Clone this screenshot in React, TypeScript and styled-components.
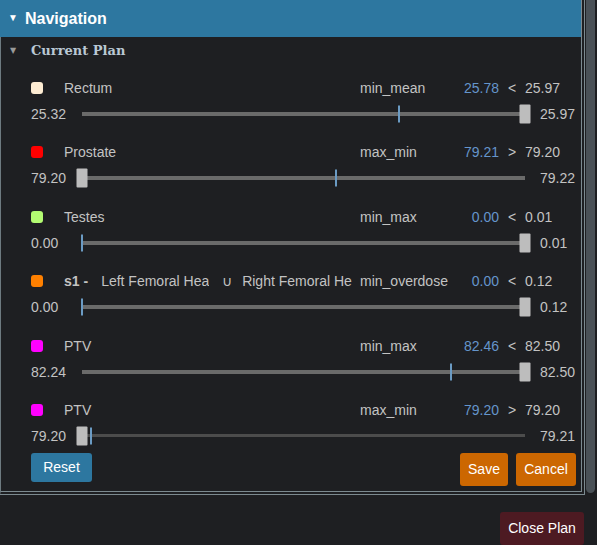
import React, { FC } from 'react';
import styled, { createGlobalStyle } from 'styled-components';

const GlobalStyle = createGlobalStyle`
  html, body {
    margin: 0;
    padding: 0;
    background: #1e1f22;
  }
  body {
    font-family: 'Liberation Sans', Arial, sans-serif;
    font-size: 14px;
    color: #c3c3c3;
  }
`;

const Page = styled.div`
  display: flex;
  width: 597px;
  height: 545px;
  overflow: hidden;
`;

const Main = styled.div`
  width: 585px;
  display: flex;
  flex-direction: column;
`;

const Panel = styled.div`
  box-sizing: border-box;
  width: 585px;
  border-left: 1px solid #6d7a80;
  border-right: 4px double #7c8a90;
  border-bottom: 4px double #7c8a90;
  padding-bottom: 5px;
`;

const Header = styled.div`
  height: 37px;
  background: #2d77a0;
  display: flex;
  align-items: center;
  padding-left: 8px;
  color: #fff;
  font-weight: bold;
  font-size: 16px;
  margin-left: -1px;
`;

const Caret = styled.span`
  font-size: 10px;
  width: 17px;
  margin-top: -2px;
`;

const SubHeader = styled.div`
  height: 26px;
  display: flex;
  align-items: center;
  padding-left: 9px;
  font-family: 'DejaVu Serif', 'Liberation Serif', serif;
  font-weight: bold;
  font-size: 13px;
  color: #b9c8d4;
`;

const SubCaret = styled.span`
  font-family: 'DejaVu Sans', sans-serif;
  font-size: 8px;
  color: #9a9a9a;
  width: 21px;
`;

const List = styled.div`
  display: flex;
  flex-direction: column;
  gap: 18.4px;
  padding: 15px 0 0 30px;
`;

const Item = styled.div`
  display: grid;
  grid-template-rows: 20px 20px;
  row-gap: 6px;
`;

const TopLine = styled.div`
  display: grid;
  grid-template-columns: 12px 317px 100px 39px 26px 1fr;
  align-items: center;
  white-space: nowrap;
`;

const Swatch = styled.span<{ $color: string }>`
  width: 12px;
  height: 12px;
  border-radius: 3px;
  background: ${(p) => p.$color};
`;

const Label = styled.div`
  display: flex;
  align-items: center;
  overflow: hidden;
  padding-left: 21px;
  margin-right: 8px;
`;

const SetName = styled.span`
  font-weight: bold;
  margin-right: 13px;
  flex-shrink: 0;
`;

const RoiName = styled.span`
  display: inline-block;
  width: 108px;
  overflow: hidden;
  white-space: nowrap;
  flex-shrink: 0;
  &:last-child {
    width: 112px;
  }
`;

const UnionSign = styled.span`
  width: 20px;
  margin-left: 13px;
  flex-shrink: 0;
`;

const Metric = styled.div``;

const Achieved = styled.div`
  text-align: right;
  color: #6595cb;
`;

const Operator = styled.div`
  text-align: center;
`;

const Target = styled.div``;

const SliderLine = styled.div`
  display: grid;
  grid-template-columns: 51px 443px 1fr;
  align-items: center;
`;

const Bound = styled.div`
  &:last-child {
    padding-left: 15px;
  }
`;

const Track = styled.div<{ $faint?: boolean }>`
  position: relative;
  height: ${(p) => (p.$faint ? 3 : 4)}px;
  background: ${(p) => (p.$faint ? '#4c4c4c' : '#6a6a6a')};
`;

const Thumb = styled.span`
  position: absolute;
  top: 50%;
  width: 11px;
  height: 19px;
  background: #bdbdbd;
  border-radius: 1px;
  transform: translate(-50%, -50%);
`;

const Marker = styled.span`
  position: absolute;
  top: 50%;
  width: 2px;
  height: 17px;
  background: #6b9bc4;
  transform: translate(-50%, -50%);
`;

const Actions = styled.div`
  display: flex;
  align-items: flex-start;
  gap: 8px;
  padding: 7px 5px 0 30px;
`;

const Spacer = styled.div`
  flex: 1;
`;

const Button = styled.button<{ $bg: string; $w: number; $h: number }>`
  width: ${(p) => p.$w}px;
  height: ${(p) => p.$h}px;
  background: ${(p) => p.$bg};
  color: #fff;
  border: none;
  border-radius: 3px;
  padding: 0;
  font-family: 'Liberation Sans', Arial, sans-serif;
  font-size: 14px;
  cursor: pointer;
`;

const Footer = styled.div`
  display: flex;
  justify-content: flex-end;
  padding-top: 17px;
  padding-right: 1px;
`;

const ScrollTrack = styled.div`
  width: 12px;
  padding-left: 1px;
`;

const ScrollThumb = styled.div`
  width: 9px;
  height: 493px;
  background: #4a5157;
  border-radius: 0 0 5px 5px;
`;

interface Constraint {
  color: string;
  label: React.ReactNode;
  metric: string;
  value: string;
  op: string;
  target: string;
  min: string;
  max: string;
  thumb: number;
  marker: number;
  faint?: boolean;
}

const constraints: Constraint[] = [
  { color: '#fdecd3', label: 'Rectum', metric: 'min_mean', value: '25.78', op: '<', target: '25.97', min: '25.32', max: '25.97', thumb: 1, marker: 0.716 },
  { color: '#ff0000', label: 'Prostate', metric: 'max_min', value: '79.21', op: '>', target: '79.20', min: '79.20', max: '79.22', thumb: 0, marker: 0.573 },
  { color: '#b3fb72', label: 'Testes', metric: 'min_max', value: '0.00', op: '<', target: '0.01', min: '0.00', max: '0.01', thumb: 1, marker: 0 },
  {
    color: '#ff8000',
    label: (
      <>
        <SetName>s1 -</SetName>
        <RoiName>Left Femoral Head</RoiName>
        <UnionSign>∪</UnionSign>
        <RoiName>Right Femoral Head</RoiName>
      </>
    ),
    metric: 'min_overdose', value: '0.00', op: '<', target: '0.12', min: '0.00', max: '0.12', thumb: 1, marker: 0,
  },
  { color: '#ff00ff', label: 'PTV', metric: 'min_max', value: '82.46', op: '<', target: '82.50', min: '82.24', max: '82.50', thumb: 1, marker: 0.833 },
  { color: '#ff00ff', label: 'PTV', metric: 'max_min', value: '79.20', op: '>', target: '79.20', min: '79.20', max: '79.21', thumb: 0, marker: 0.02, faint: true },
];

const ConstraintItem: FC<{ c: Constraint }> = ({ c }) => (
  <Item>
    <TopLine>
      <Swatch $color={c.color} />
      <Label>{c.label}</Label>
      <Metric>{c.metric}</Metric>
      <Achieved>{c.value}</Achieved>
      <Operator>{c.op}</Operator>
      <Target>{c.target}</Target>
    </TopLine>
    <SliderLine>
      <Bound>{c.min}</Bound>
      <Track $faint={c.faint}>
        <Marker style={{ left: `${c.marker * 100}%` }} />
        <Thumb style={{ left: `${c.thumb * 100}%` }} />
      </Track>
      <Bound>{c.max}</Bound>
    </SliderLine>
  </Item>
);

const App: FC = () => (
  <>
    <GlobalStyle />
    <Page>
      <Main>
        <Panel>
          <Header>
            <Caret>▼</Caret>
            Navigation
          </Header>
          <SubHeader>
            <SubCaret>▼</SubCaret>
            Current Plan
          </SubHeader>
          <List>
            {constraints.map((c, i) => (
              <ConstraintItem key={i} c={c} />
            ))}
          </List>
          <Actions>
            <Button $bg="#2d77a0" $w={61} $h={29}>Reset</Button>
            <Spacer />
            <Button $bg="#cc6701" $w={48} $h={33}>Save</Button>
            <Button $bg="#cc6701" $w={60} $h={33}>Cancel</Button>
          </Actions>
        </Panel>
        <Footer>
          <Button $bg="#4d1a22" $w={84} $h={33}>Close Plan</Button>
        </Footer>
      </Main>
      <ScrollTrack>
        <ScrollThumb />
      </ScrollTrack>
    </Page>
  </>
);

export default App;
